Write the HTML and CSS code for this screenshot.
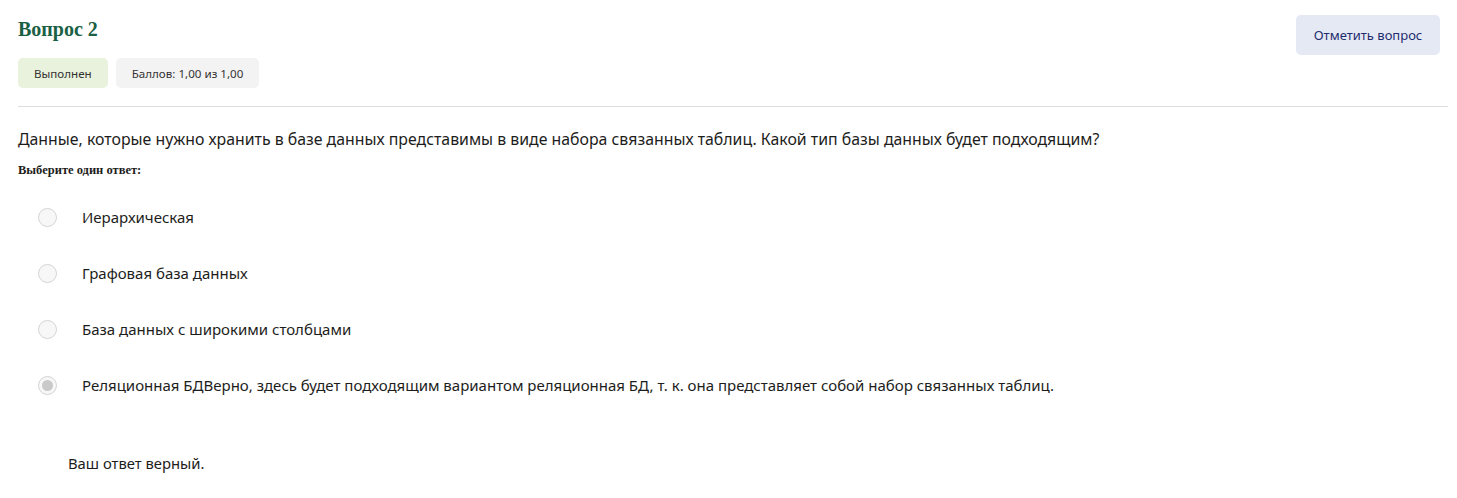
FILE: index.html
```html
<!DOCTYPE html>
<html lang="ru">
<head>
<meta charset="utf-8">
<link rel="stylesheet" href="styles.css">
</head>
<body>
<div class="que">
  <div class="head">
    <div class="info">
      <h3 class="title">Вопрос 2</h3>
      <div class="badges">
        <span class="badge done">Выполнен</span>
        <span class="badge grade">Баллов: 1,00 из 1,00</span>
      </div>
    </div>
    <button class="flag">Отметить вопрос</button>
  </div>
  <div class="content">
    <p class="qtext">Данные, которые нужно хранить в базе данных представимы в виде набора связанных таблиц. Какой тип базы данных будет подходящим?</p>
    <p class="prompt">Выберите один ответ:</p>
    <div class="answers">
      <div class="opt"><span class="radio"></span><span class="label">Иерархическая</span></div>
      <div class="opt"><span class="radio"></span><span class="label">Графовая база данных</span></div>
      <div class="opt"><span class="radio"></span><span class="label">База данных с широкими столбцами</span></div>
      <div class="opt"><span class="radio checked"></span><span class="label">Реляционная БДВерно, здесь будет подходящим вариантом реляционная БД, т. к. она представляет собой набор связанных таблиц.</span></div>
    </div>
    <p class="feedback">Ваш ответ верный.</p>
  </div>
</div>
</body>
</html>
```
FILE: styles.css
```css
* { box-sizing: border-box; }
body {
  margin: 0;
  background: #fff;
  font-family: "Noto Sans", "Open Sans", sans-serif;
  color: #1d1d1b;
}
.que {
  padding: 14px 9px 0 18px;
}
.head {
  display: flex;
  justify-content: space-between;
  align-items: flex-start;
  padding-bottom: 18px;
  border-bottom: 1px solid #dedede;
}
.title {
  margin: 3px 0 0;
  font-family: "Liberation Serif", "DejaVu Serif", serif;
  font-weight: bold;
  font-size: 20px;
  line-height: 24px;
  color: #1a6044;
}
.badges {
  display: flex;
  gap: 8px;
  margin-top: 17px;
}
.badge {
  display: inline-flex;
  align-items: center;
  height: 30px;
  padding: 0 16px;
  border-radius: 5px;
  font-size: 11.6px;
  color: #333;
}
.badge.done { background: #e9f2dc; }
.badge.grade { background: #f3f3f3; }
.flag {
  margin: 1px 8px 0 0;
  width: 144px;
  height: 40px;
  border: none;
  border-radius: 5px;
  background: #e5e9f4;
  color: #1e2d6e;
  font-family: inherit;
  font-size: 13px;
}
.content {
  padding-top: 20px;
}
.qtext {
  margin: 0;
  font-size: 15.85px;
  line-height: 24px;
  color: #1d1d1b;
}
.prompt {
  margin: 11px 0 0;
  font-family: "Liberation Serif", "DejaVu Serif", serif;
  font-weight: bold;
  font-size: 12.5px;
  line-height: 16px;
}
.answers {
  margin-top: 27px;
  display: flex;
  flex-direction: column;
  gap: 32px;
}
.opt {
  display: flex;
  align-items: center;
  height: 24px;
  padding-left: 20px;
}
.radio {
  flex: none;
  width: 19px;
  height: 19px;
  border-radius: 50%;
  border: 1px solid #d4d4d4;
  background: #f7f7f7;
  margin-right: 25px;
  position: relative;
}
.radio.checked::after {
  content: "";
  position: absolute;
  left: 3px; top: 3px;
  width: 11px; height: 11px;
  border-radius: 50%;
  background: #c9c9c9;
}
.label {
  font-size: 15px;
  color: #1d1d1b;
}
.feedback {
  margin: 54px 0 0 50px;
  font-size: 14.8px;
  line-height: 24px;
}
```
